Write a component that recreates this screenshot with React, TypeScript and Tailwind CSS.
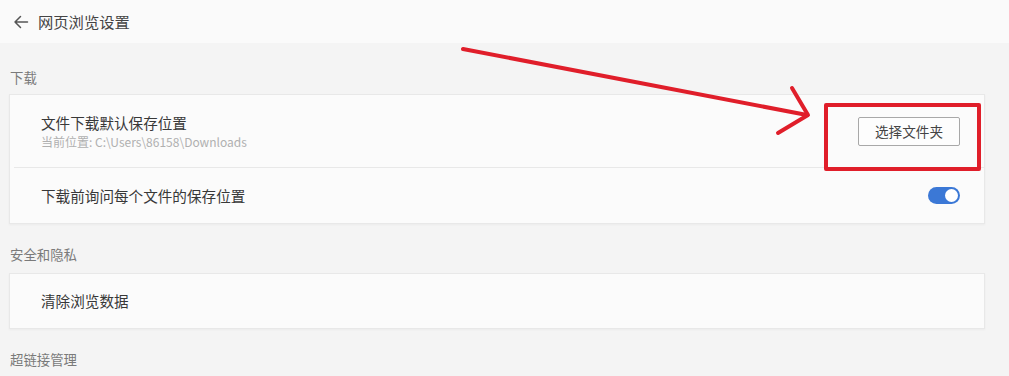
import React from 'react';

const font = { fontFamily: '"Noto Sans CJK SC", "Noto Sans", sans-serif' };

const Toggle: React.FC<{ on: boolean }> = ({ on }) => (
  <div className={`w-[32px] h-[17px] rounded-full flex items-center px-[2px] ${on ? 'bg-[#3b78d6] justify-end' : 'bg-gray-300 justify-start'}`}>
    <div className="w-[13px] h-[13px] rounded-full bg-white" />
  </div>
);

const SectionLabel: React.FC<{ children: React.ReactNode }> = ({ children }) => (
  <div className="pl-[10px] h-[17px] text-[13.4px] leading-[17px] text-[#7a7a7a]">{children}</div>
);

export default function App() {
  return (
    <div className="relative w-[1009px] h-[376px] overflow-hidden bg-[#f4f4f4]" style={font}>
      {/* header */}
      <div className="h-[43px] bg-[#fafafa] flex items-center pl-[13px] gap-[9px]">
        <svg width="16" height="16" viewBox="0 0 16 16" fill="none" stroke="#555" strokeWidth="1.5" strokeLinecap="round" strokeLinejoin="round">
          <path d="M14.5 8H2M7.5 2.5L2 8l5.5 5.5" />
        </svg>
        <span className="text-[15.3px] text-[#444]">网页浏览设置</span>
      </div>

      <div className="pt-[26px]">
        <SectionLabel>下载</SectionLabel>
        <div className="ml-[9px] mt-[8px] w-[976px] bg-[#fbfbfb] border border-[#e8e8e8] shadow-[0_1px_2px_rgba(0,0,0,0.04)]">
          <div className="h-[72px] flex items-center justify-between pl-[31px] pr-[24px]">
            <div className="flex flex-col">
              <span className="text-[14.6px] leading-[18px] text-[#383838]">文件下载默认保存位置</span>
              <span className="mt-[3px] text-[12px] leading-[14px] text-[#b0b0b0]">当前位置: C:\Users\86158\Downloads</span>
            </div>
            <button className="w-[102px] h-[29px] border border-[#a8a8a8] rounded-[2px] bg-[#fdfdfd] text-[13.6px] text-[#444]">选择文件夹</button>
          </div>
          <div className="ml-[4px] border-t border-[#e8e8e8]" />
          <div className="h-[55px] flex items-center justify-between pl-[31px] pr-[24px]">
            <span className="text-[14.6px] text-[#383838]">下载前询问每个文件的保存位置</span>
            <Toggle on />
          </div>
        </div>

        <div className="mt-[22px]">
          <SectionLabel>安全和隐私</SectionLabel>
        </div>
        <div className="ml-[9px] mt-[10px] w-[976px] h-[56px] bg-[#fbfbfb] border border-[#e8e8e8] shadow-[0_1px_2px_rgba(0,0,0,0.04)] flex items-center pl-[31px]">
          <span className="text-[14.6px] text-[#383838]">清除浏览数据</span>
        </div>

        <div className="mt-[22px]">
          <SectionLabel>超链接管理</SectionLabel>
        </div>
      </div>

      {/* red annotation */}
      <svg className="absolute inset-0 pointer-events-none" width="1009" height="376" viewBox="0 0 1009 376" fill="none" stroke="#e01e2a" strokeLinecap="round" strokeLinejoin="round">
        <path d="M463 49L807 115" strokeWidth="4" />
        <path d="M792 88L808 115L778 133" strokeWidth="4" />
        <rect x="826" y="105" width="153" height="64" strokeWidth="4" strokeLinecap="butt" />
      </svg>
    </div>
  );
}
